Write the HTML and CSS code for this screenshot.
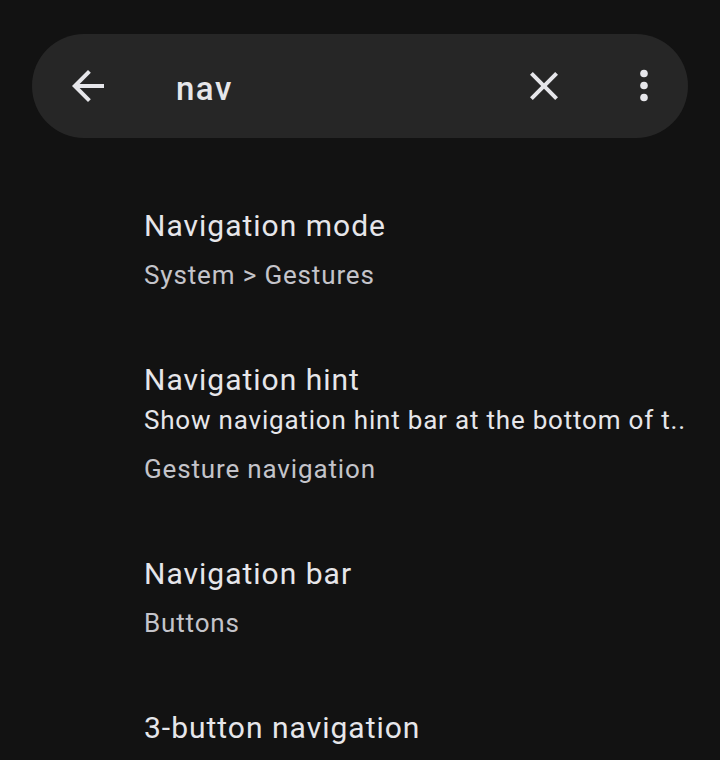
FILE: index.html
```html
<!DOCTYPE html>
<html lang="en">
<head>
    <meta charset="UTF-8">
    <meta name="viewport" content="width=device-width, initial-scale=1.0">
    <title>Search settings</title>
    <link rel="stylesheet" href="styles.css">
</head>
<body>
    <div class="search-bar">
        <button class="icon-btn back" aria-label="Back">
            <svg viewBox="0 0 24 24"><path d="M20 11H7.83l5.59-5.59L12 4l-8 8 8 8 1.41-1.41L7.83 13H20v-2z"/></svg>
        </button>
        <div class="query">nav</div>
        <button class="icon-btn clear" aria-label="Clear">
            <svg viewBox="0 0 24 24"><path d="M19 6.41L17.59 5 12 10.59 6.41 5 5 6.41 10.59 12 5 17.59 6.41 19 12 13.41 17.59 19 19 17.59 13.41 12z"/></svg>
        </button>
        <button class="icon-btn more" aria-label="More options">
            <svg viewBox="0 0 24 24"><circle cx="12" cy="5.75" r="1.9"/><circle cx="12" cy="11.75" r="1.9"/><circle cx="12" cy="17.75" r="1.9"/></svg>
        </button>
    </div>

    <ul class="results">
        <li class="result">
            <div class="result-title">Navigation mode</div>
            <div class="result-path">System &gt; Gestures</div>
        </li>
        <li class="result">
            <div class="result-title">Navigation hint</div>
            <div class="result-summary">Show navigation hint bar at the bottom of t..</div>
            <div class="result-path">Gesture navigation</div>
        </li>
        <li class="result">
            <div class="result-title">Navigation bar</div>
            <div class="result-path">Buttons</div>
        </li>
        <li class="result">
            <div class="result-title">3-button navigation</div>
        </li>
    </ul>
</body>
</html>
```

FILE: styles.css
```css
:root {
    --background-color: #121212;
    --bar-color: #262626;
    --text-color: #e6e6ea;
    --muted-color: #c4c4ca;
}

body {
    margin: 0;
    background-color: var(--background-color);
    color: var(--text-color);
    font-family: Roboto, 'Noto Sans', sans-serif;
    overflow: hidden;
    height: 760px;
}

.search-bar {
    display: flex;
    align-items: center;
    margin: 34px 32px 0;
    height: 104px;
    padding: 0 20px 0 32px;
    background-color: var(--bar-color);
    border-radius: 52px;
}

.icon-btn {
    width: 48px;
    height: 48px;
    padding: 0;
    border: none;
    background: none;
    display: flex;
    align-items: center;
    justify-content: center;
}

.icon-btn svg {
    width: 48px;
    height: 48px;
    fill: var(--text-color);
}

.query {
    flex: 1;
    margin-left: 64px;
    font-size: 33px;
    font-weight: 500;
    letter-spacing: 1.5px;
    color: var(--text-color);
    padding-top: 4px;
}

.clear {
    margin-right: 52px;
}

.results {
    list-style: none;
    margin: 36px 0 0;
    padding: 0;
}

.result {
    padding: 32px 0 33px 144px;
}

.result-title {
    font-size: 30px;
    line-height: 40px;
    letter-spacing: 1px;
}

.result-summary {
    font-size: 26px;
    line-height: 40px;
    letter-spacing: 0.8px;
    white-space: nowrap;
    overflow: hidden;
}

.result-path {
    margin-top: 9px;
    font-size: 26px;
    line-height: 40px;
    letter-spacing: 0.85px;
    color: var(--muted-color);
}
```
